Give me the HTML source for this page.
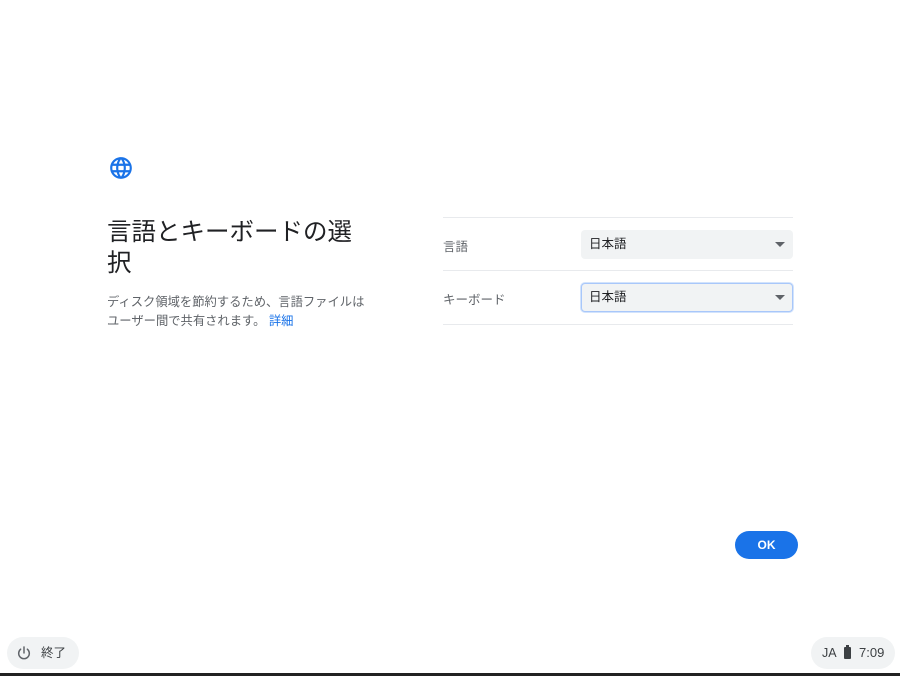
<!DOCTYPE html>
<html><head><meta charset="utf-8"><style>
*{margin:0;padding:0;box-sizing:border-box}
body{width:900px;height:676px;background:#fff;position:relative;overflow:hidden;font-family:"Liberation Sans","Noto Sans CJK JP",sans-serif;color:#202124}
.abs{position:absolute}
h1{position:absolute;left:107px;top:217px;width:255px;font-size:24.5px;font-weight:400;line-height:31px;color:#202124}
.desc{left:107px;top:293px;width:300px;font-size:12.3px;line-height:19px;color:#5f6368;white-space:nowrap}
.desc a{color:#1a73e8;text-decoration:none}
.line{left:443px;width:350px;height:1px;background:#e8eaed}
.lbl{left:443px;font-size:12.5px;color:#5f6368}
.sel{left:581px;width:212px;height:29px;background:#f1f3f4;border-radius:4px;font-size:12.5px;line-height:29px;padding-left:8px;color:#202124}
.sel:after{content:"";position:absolute;right:8px;top:12px;border-left:5px solid transparent;border-right:5px solid transparent;border-top:5px solid #5f6368}
.foc{border:1.5px solid #a8c7fa;box-shadow:0 0 0 1px #d2e3fc;line-height:26px;padding-left:7px}
.foc:after{top:11px;right:7px}
.ok{left:735px;top:531px;width:63px;height:28px;border-radius:14px;background:#1a73e8;color:#fff;font-size:12px;font-weight:700;text-align:center;line-height:28px}
.pill{top:637px;height:32px;border-radius:16px;background:#f1f3f4;font-size:12.5px;color:#3c4043;line-height:32px}
</style></head><body>
<svg class="abs" style="left:108px;top:155px" width="26" height="26" viewBox="0 0 24 24"><path fill="#1a73e8" d="M11.99 2C6.47 2 2 6.48 2 12s4.47 10 9.99 10C17.52 22 22 17.52 22 12S17.52 2 11.99 2zm6.93 6h-2.95a15.65 15.65 0 0 0-1.38-3.56A8.03 8.03 0 0 1 18.92 8zM12 4.04c.83 1.2 1.48 2.53 1.91 3.96h-3.82c.43-1.43 1.08-2.76 1.91-3.96zM4.26 14C4.1 13.36 4 12.69 4 12s.1-1.36.26-2h3.38c-.08.66-.14 1.32-.14 2s.06 1.34.14 2H4.26zm.82 2h2.95c.32 1.25.78 2.45 1.38 3.56A7.99 7.99 0 0 1 5.08 16zm2.95-8H5.08a7.99 7.99 0 0 1 4.33-3.56A15.65 15.65 0 0 0 8.03 8zM12 19.96c-.83-1.2-1.48-2.53-1.91-3.96h3.82c-.43 1.43-1.08 2.76-1.91 3.96zM14.34 14H9.66c-.09-.66-.16-1.32-.16-2s.07-1.35.16-2h4.68c.09.65.16 1.32.16 2s-.07 1.34-.16 2zm.25 5.56c.6-1.11 1.06-2.31 1.38-3.56h2.95a8.03 8.03 0 0 1-4.33 3.56zM16.36 14c.08-.66.14-1.32.14-2s-.06-1.34-.14-2h3.38c.16.64.26 1.31.26 2s-.1 1.36-.26 2h-3.38z"/></svg>
<h1>言語とキーボードの選択</h1>
<div class="abs desc">ディスク領域を節約するため、言語ファイルは<br>ユーザー間で共有されます。 <a>詳細</a></div>
<div class="abs line" style="top:217px"></div>
<div class="abs lbl" style="top:236px">言語</div>
<div class="abs sel" style="top:230px">日本語</div>
<div class="abs line" style="top:270px"></div>
<div class="abs lbl" style="top:289px">キーボード</div>
<div class="abs sel foc" style="top:283px">日本語</div>
<div class="abs line" style="top:324px"></div>
<div class="abs ok">OK</div>
<div class="abs pill" style="left:7px;width:72px;padding-left:34px">終了</div>
<svg class="abs" style="left:16px;top:645px" width="16" height="16" viewBox="0 0 24 24"><path fill="none" stroke="#5f6368" stroke-width="2.2" stroke-linecap="round" d="M12 3v9M7 6.3A8 8 0 1 0 17 6.3"/></svg>
<div class="abs pill" style="left:811px;width:84px;padding-left:11px">JA</div>
<div class="abs" style="left:844px;top:647px;width:7px;height:12px;background:#3c4043;border-radius:1px"></div>
<div class="abs" style="left:846px;top:645px;width:3px;height:2px;background:#3c4043"></div>
<div class="abs" style="left:859px;top:637px;font-size:13px;line-height:32px;color:#3c4043">7:09</div>
<div class="abs" style="left:0;top:673px;width:900px;height:3px;background:#222"></div>
</body></html>
